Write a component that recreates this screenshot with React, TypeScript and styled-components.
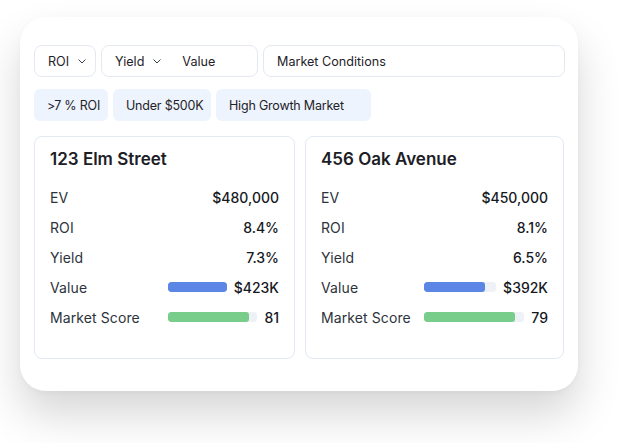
import React from "react";
import styled, { createGlobalStyle } from "styled-components";

const GlobalStyle = createGlobalStyle`
  html, body {
    margin: 0;
    padding: 0;
    background: #ffffff;
  }
  body {
    font-family: Inter, "Noto Sans", "Liberation Sans", sans-serif;
    color: #1f2329;
    -webkit-font-smoothing: antialiased;
  }
`;

const Page = styled.div`
  min-height: 443px;
  box-sizing: border-box;
  padding: 17px 0 0 20px;
`;

const Panel = styled.div`
  width: 558px;
  height: 374px;
  box-sizing: border-box;
  padding: 28px 13px 32px 14px;
  background: #ffffff;
  border-radius: 26px;
  box-shadow: 0 24px 44px rgba(0, 0, 0, 0.16), 0 2px 6px rgba(0, 0, 0, 0.03);
  display: flex;
  flex-direction: column;
`;

const FilterBar = styled.div`
  display: flex;
  gap: 5px;
  height: 32px;
`;

const Field = styled.div<{ width?: number }>`
  box-sizing: border-box;
  height: 32px;
  ${({ width }) => (width ? `width: ${width}px;` : "flex: 1;")}
  border: 1px solid #e4e9f1;
  border-radius: 8px;
  display: flex;
  align-items: center;
  padding: 0 13px;
  font-size: 12.6px;
  color: #1f2329;
`;

const SelectLabel = styled.span`
  display: inline-flex;
  align-items: center;
  gap: 9px;
  margin-right: 21px;
`;

const Chevron = () => (
  <svg width="8" height="5" viewBox="0 0 8 5" fill="none">
    <path d="M0.8 0.8 L4 4 L7.2 0.8" stroke="#3a3f47" strokeWidth="1" strokeLinecap="round" strokeLinejoin="round" />
  </svg>
);

const TagRow = styled.div`
  display: flex;
  gap: 5px;
  margin-top: 12px;
`;

const Tag = styled.div<{ width: number }>`
  width: ${({ width }) => width}px;
  height: 32px;
  box-sizing: border-box;
  padding: 0 0 0 13px;
  display: flex;
  align-items: center;
  background: #eef4fd;
  border-radius: 6px;
  font-size: 12.5px;
  letter-spacing: -0.2px;
  color: #1f2329;
  white-space: nowrap;
`;

const CardGrid = styled.div`
  display: grid;
  grid-template-columns: 261px 259px;
  gap: 10px;
  margin-top: 15px;
  flex: 1;
`;

const Card = styled.div`
  border: 1px solid #e3e9f2;
  border-radius: 8px;
  padding: 9px 15px 0 15px;
`;

const Title = styled.div`
  font-size: 17px;
  line-height: 26px;
  font-weight: 600;
  color: #1c2026;
  margin-bottom: 10px;
`;

const Row = styled.div`
  height: 30px;
  display: flex;
  align-items: center;
  justify-content: space-between;
  font-size: 14px;
`;

const Label = styled.span`
  color: #2d333b;
  letter-spacing: 0.1px;
`;

const Value = styled.span`
  font-weight: 500;
  color: #16191e;
`;

const Meter = styled.div<{ width: number }>`
  width: ${({ width }) => width}px;
  display: flex;
  align-items: center;
  gap: 7px;
`;

const Track = styled.div`
  flex: 1;
  height: 10px;
  background: #eef1f5;
  border-radius: 3px;
  overflow: hidden;
`;

const Fill = styled.div<{ color: string }>`
  height: 100%;
  background: ${({ color }) => color};
  border-radius: 3px;
`;

type Property = {
  title: string;
  ev: string;
  roi: string;
  yieldPct: string;
  value: string;
  valuePct: number;
  score: string;
  scorePct: number;
  meter: number;
};

const properties: Property[] = [
  {
    title: "123 Elm Street",
    ev: "$480,000",
    roi: "8.4%",
    yieldPct: "7.3%",
    value: "$423K",
    valuePct: 100,
    score: "81",
    scorePct: 91,
    meter: 111,
  },
  {
    title: "456 Oak Avenue",
    ev: "$450,000",
    roi: "8.1%",
    yieldPct: "6.5%",
    value: "$392K",
    valuePct: 84,
    score: "79",
    scorePct: 91,
    meter: 124,
  },
];

const PropertyCard = ({ p }: { p: Property }) => (
  <Card>
    <Title>{p.title}</Title>
    <Row>
      <Label>EV</Label>
      <Value>{p.ev}</Value>
    </Row>
    <Row>
      <Label>ROI</Label>
      <Value>{p.roi}</Value>
    </Row>
    <Row>
      <Label>Yield</Label>
      <Value>{p.yieldPct}</Value>
    </Row>
    <Row>
      <Label>Value</Label>
      <Meter width={p.meter}>
        <Track>
          <Fill color="#5b86e5" style={{ width: `${p.valuePct}%` }} />
        </Track>
        <Value>{p.value}</Value>
      </Meter>
    </Row>
    <Row>
      <Label>Market Score</Label>
      <Meter width={p.meter}>
        <Track>
          <Fill color="#79cd8a" style={{ width: `${p.scorePct}%` }} />
        </Track>
        <Value>{p.score}</Value>
      </Meter>
    </Row>
  </Card>
);

export default function App() {
  return (
    <>
      <GlobalStyle />
      <Page>
        <Panel>
          <FilterBar>
            <Field width={62}>
              <SelectLabel>
                ROI <Chevron />
              </SelectLabel>
            </Field>
            <Field width={157}>
              <SelectLabel>
                Yield <Chevron />
              </SelectLabel>
              Value
            </Field>
            <Field>Market Conditions</Field>
          </FilterBar>
          <TagRow>
            <Tag width={74}>&gt;7 % ROI</Tag>
            <Tag width={98}>Under $500K</Tag>
            <Tag width={155}>High Growth Market</Tag>
          </TagRow>
          <CardGrid>
            {properties.map((p) => (
              <PropertyCard key={p.title} p={p} />
            ))}
          </CardGrid>
        </Panel>
      </Page>
    </>
  );
}
